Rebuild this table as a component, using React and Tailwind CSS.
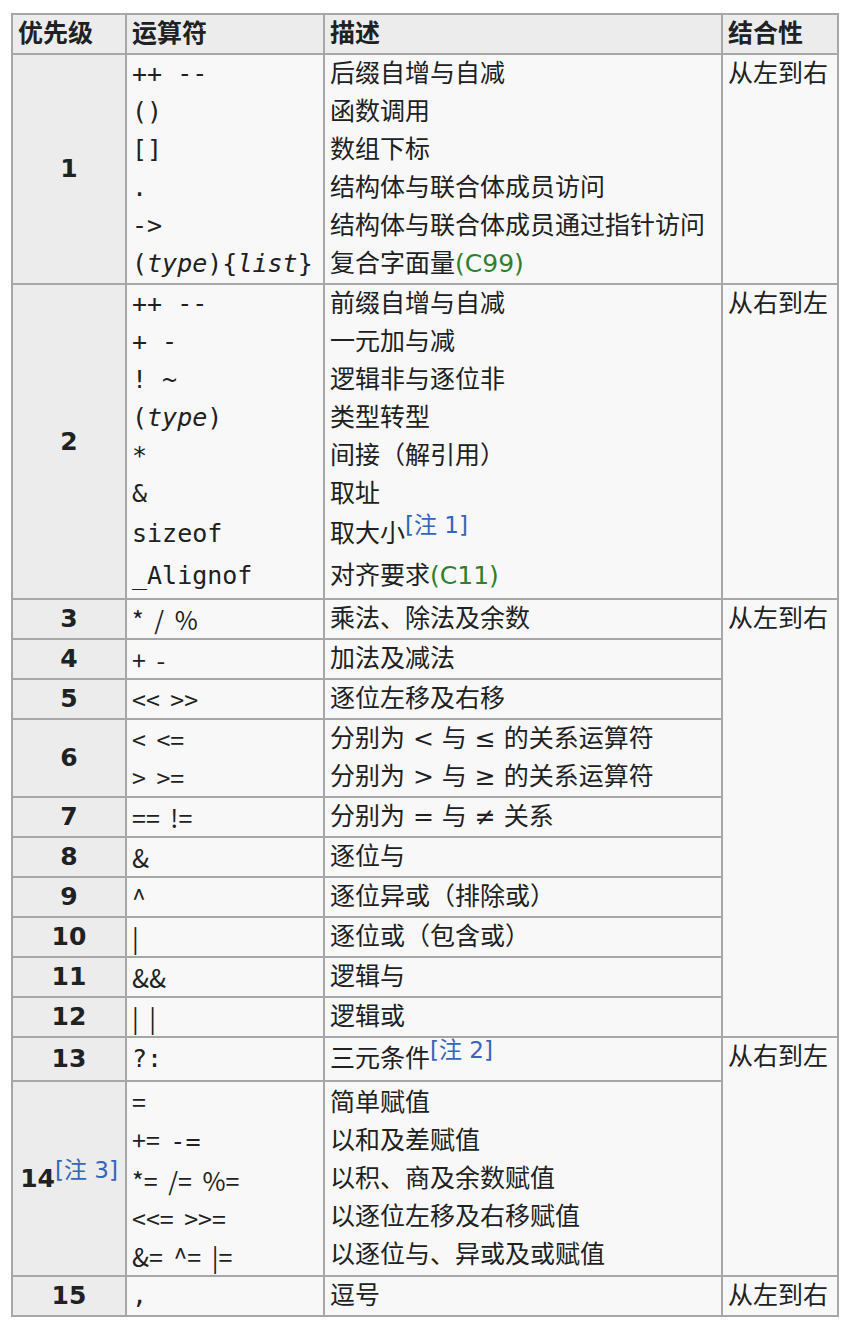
const sans = "font-['DejaVu_Sans','Noto_Sans_CJK_SC',sans-serif]";
const mono = "font-['DejaVu_Sans_Mono','Noto_Sans_CJK_SC',monospace]";
const cjk = "font-['Noto_Sans_CJK_SC',sans-serif] [word-spacing:5px]";

const Note = ({ n }) => (
  <sup className="text-[23px] leading-none align-baseline relative top-[-9px] text-[#3366bb] font-normal [word-spacing:0]">
    [注 {n}]
  </sup>
);

const Std = ({ children }) => <span className="text-[#2f7f2f]">{children}</span>;

const rows = [
  {
    p: '1',
    font: mono,
    ops: ['++ --', '()', '[]', '.', '->', <>(<i>type</i>){'{'}<i>list</i>{'}'}</>],
    descs: [
      '后缀自增与自减',
      '函数调用',
      '数组下标',
      '结构体与联合体成员访问',
      '结构体与联合体成员通过指针访问',
      <>复合字面量<Std>(C99)</Std></>,
    ],
    assoc: '从左到右',
    span: 1,
  },
  {
    p: '2',
    font: mono,
    ops: ['++ --', '+ -', '! ~', <>(<i>type</i>)</>, '*', '&', 'sizeof', '_Alignof'],
    descs: [
      '前缀自增与自减',
      '一元加与减',
      '逻辑非与逐位非',
      '类型转型',
      '间接（解引用）',
      '取址',
      <>取大小<Note n="1" /></>,
      <>对齐要求<Std>(C11)</Std></>,
    ],
    lines: { 6: 'h-[44px] leading-[42px]', 7: 'h-[41px] leading-[38px]' },
    assoc: '从右到左',
    span: 1,
  },
  { p: '3', font: cjk, ops: ['* / %'], descs: ['乘法、除法及余数'], assoc: '从左到右', span: 10 },
  { p: '4', font: cjk, ops: ['+ -'], descs: ['加法及减法'] },
  { p: '5', font: cjk, ops: ['<< >>'], descs: ['逐位左移及右移'] },
  {
    p: '6',
    font: cjk,
    ops: ['< <=', '> >='],
    descs: ['分别为 < 与 ≤ 的关系运算符', '分别为 > 与 ≥ 的关系运算符'],
  },
  { p: '7', font: cjk, ops: ['== !='], descs: ['分别为 = 与 ≠ 关系'] },
  { p: '8', font: cjk, ops: ['&'], descs: ['逐位与'] },
  { p: '9', font: cjk, ops: ['^'], descs: ['逐位异或（排除或）'] },
  { p: '10', font: cjk, ops: ['|'], descs: ['逐位或（包含或）'] },
  { p: '11', font: cjk, ops: ['&&'], descs: ['逻辑与'] },
  { p: '12', font: cjk, ops: ['| |'], descs: ['逻辑或'] },
  {
    p: '13',
    font: mono,
    ops: ['?:'],
    descs: [<>三元条件<Note n="2" /></>],
    lines: { 0: 'h-[42px] leading-[42px]' },
    assoc: '从右到左',
    span: 2,
  },
  {
    p: <>14<Note n="3" /></>,
    font: cjk,
    ops: ['=', <>+= <span className={mono}>-=</span></>, '*= /= %=', '<<= >>=', '&= ^= |='],
    descs: ['简单赋值', '以和及差赋值', '以积、商及余数赋值', '以逐位左移及右移赋值', '以逐位与、异或及或赋值'],
  },
  { p: '15', font: mono, ops: [','], descs: ['逗号'], assoc: '从左到右', span: 1 },
];

export default function App() {
  const cell = 'border-2 border-[#a7a7a7] px-[5px] py-0';
  return (
    <div className={`bg-white min-h-[1326px] pt-[13px] pl-[11px] ${sans} text-[25px] leading-[38px] text-[#202122]`}>
      <table className="table-fixed border-collapse w-[826px]">
        <colgroup>
          <col className="w-[114px]" />
          <col className="w-[198px]" />
          <col className="w-[398px]" />
          <col className="w-[116px]" />
        </colgroup>
        <thead>
          <tr className="bg-[#ececec]">
            <th className={`${cell} text-left font-bold`}>优先级</th>
            <th className={`${cell} text-left font-bold`}>运算符</th>
            <th className={`${cell} text-left font-bold`}>描述</th>
            <th className={`${cell} text-left font-bold`}>结合性</th>
          </tr>
        </thead>
        <tbody>
          {rows.map((r, i) => (
            <tr key={i}>
              <th className={`${cell} bg-[#ececec] text-center align-middle font-bold whitespace-nowrap px-0`}>{r.p}</th>
              <td className={`${cell} bg-[#f8f8f8] align-middle whitespace-nowrap ${r.font}`}>
                {r.ops.map((o, j) => (
                  <div key={j} className={r.lines?.[j] ?? ''}>
                    {o}
                  </div>
                ))}
              </td>
              <td className={`${cell} bg-[#f8f8f8] align-middle whitespace-nowrap`}>
                {r.descs.map((d, j) => (
                  <div key={j} className={r.lines?.[j] ?? ''}>
                    {d}
                  </div>
                ))}
              </td>
              {r.assoc && (
                <td rowSpan={r.span} className={`${cell} bg-[#f8f8f8] align-top`}>
                  {r.assoc}
                </td>
              )}
            </tr>
          ))}
        </tbody>
      </table>
    </div>
  );
}
